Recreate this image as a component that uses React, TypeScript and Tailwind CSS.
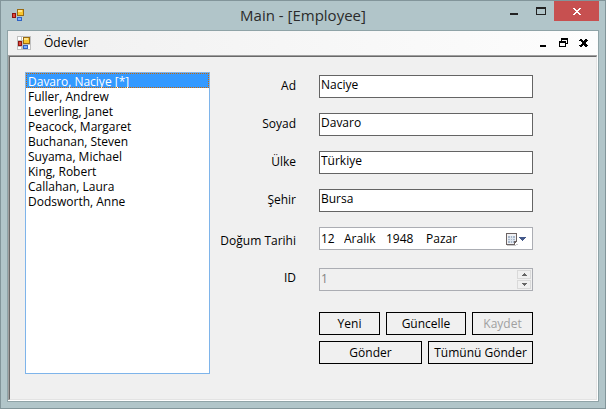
import { ReactNode } from "react";

const employees = [
  "Davaro, Naciye [*]",
  "Fuller, Andrew",
  "Leverling, Janet",
  "Peacock, Margaret",
  "Buchanan, Steven",
  "Suyama, Michael",
  "King, Robert",
  "Callahan, Laura",
  "Dodsworth, Anne",
];

const textFields = [
  { id: "ad", label: "Ad", value: "Naciye" },
  { id: "soyad", label: "Soyad", value: "Davaro" },
  { id: "ulke", label: "Ülke", value: "Türkiye" },
  { id: "sehir", label: "Şehir", value: "Bursa" },
];

function FormGlyph({ framed = false }: { framed?: boolean }) {
  return (
    <svg width="14" height="14" viewBox="0 0 14 14" shapeRendering="crispEdges" aria-hidden="true">
      {framed && (
        <>
          <path d="M0 0h14v14H0z" fill="#c0c0c0" />
          <path d="M1 1h3v3H1zM1 11h3v2H1zM5 1h1v3H5zM11 9h2v4h-2z" fill="#fff" />
        </>
      )}
      <path d="M1 5h4v5H1z" fill="#8e1410" />
      <path d="M2 6h2v3H2z" fill="#e0483a" />
      <path d="M6 1h7v7H6z" fill="#9a6a10" />
      <path d="M7 2h5v5H7z" fill="#f7c52e" />
      <path d="M7 2h4v2H7z" fill="#ffe48a" />
      <path d="M6 9h5v4H6z" fill="#2f62c4" />
      <path d="M7 10h3v2H7z" fill="#7fb0fa" />
    </svg>
  );
}

function Field({ id, label, labelClass = "pb-0.5", children }: { id: string; label: string; labelClass?: string; children: ReactNode }) {
  return (
    <div className="flex h-[23px] items-center gap-[23px]">
      <label htmlFor={id} className={`w-[86px] shrink-0 text-right whitespace-nowrap ${labelClass}`}>
        {label}
      </label>
      {children}
    </div>
  );
}

function CommandButton({ className, disabled, children }: { className: string; disabled?: boolean; children: ReactNode }) {
  return (
    <button
      type="button"
      disabled={disabled}
      className={`h-[23px] border border-black pt-px leading-5 whitespace-nowrap disabled:text-[#a0a0a0] ${className}`}
    >
      {children}
    </button>
  );
}

export default function App() {
  return (
    <div className="flex h-screen flex-col border border-[#82959a] bg-[#b1c5c9] px-1.5 pb-1.5 font-['Open_Sans','Noto_Sans',sans-serif] text-[12px] text-black">
      <header className="flex h-[29px] shrink-0 items-start">
        <div className="flex w-[97px] pt-[7px] pl-1">
          <FormGlyph />
        </div>
        <h1 className="flex-1 pt-1 text-center text-[15px] leading-5 text-[#2b2b2b]">Main - [Employee]</h1>
        <div className="flex">
          <button type="button" aria-label="Simge durumuna küçült" className="h-5 w-[26px]">
            <svg width="26" height="20" shapeRendering="crispEdges"><path d="M8 12h8v2H8z" fill="#222" /></svg>
          </button>
          <button type="button" aria-label="Ekranı kapla" className="h-5 w-[26px]">
            <svg width="26" height="20" shapeRendering="crispEdges"><path d="M8 6h10v8H8zm1 2v5h8V8z" fill="#222" fillRule="evenodd" /></svg>
          </button>
          <button type="button" aria-label="Kapat" className="h-5 w-[45px] bg-[#c75050]">
            <svg width="45" height="20" shapeRendering="crispEdges">
              <path d="M19 7h2v1h1v1h2V8h1V7h2v1h-1v1h-1v1h-1v1h1v1h1v1h1v1h-2v-1h-1v-1h-2v1h-1v1h-2v-1h1v-1h1v-1h1v-1h-1V9h-1V8h-1z" fill="#fff" />
            </svg>
          </button>
        </div>
      </header>

      <div className="flex min-h-0 flex-1 flex-col border border-[#8fa3a7] bg-white">
        <nav className="flex h-6 shrink-0 items-center bg-linear-to-r from-[#f0f0f0] to-[#fdfdfd] pr-[5px] pl-[9px]">
          <FormGlyph framed />
          <button type="button" className="ml-[13px] leading-6">Ödevler</button>
          <div className="ml-auto flex">
            <button type="button" aria-label="Küçült" className="size-5">
              <svg width="20" height="20" shapeRendering="crispEdges"><path d="M7 12h6v2H7z" /></svg>
            </button>
            <button type="button" aria-label="Önceki boyut" className="size-5">
              <svg width="20" height="20" shapeRendering="crispEdges">
                <path d="M8 5h7v6h-2v3H6V8h2zm1 2v1h4v2h1V7zM7 10v3h5v-3z" fillRule="evenodd" />
              </svg>
            </button>
            <button type="button" aria-label="Kapat" className="size-5">
              <svg width="20" height="20" shapeRendering="crispEdges">
                <path d="M7 6h2v1h1v1h1V7h1V6h2v1h1v1h-1v1h-1v2h1v1h1v1h-1v1h-2v-1h-1v-1h-1v1H9v1H7v-1H6v-1h2v-1h1V9H8V8H6V7h1z" />
              </svg>
            </button>
          </div>
        </nav>

        <div className="mr-px mb-px flex min-h-0 flex-1 border-t border-l border-[#a0a0a0]">
          <main className="flex min-w-0 flex-1 border border-t-[#696969] border-r-[#e3e3e3] border-b-[#e3e3e3] border-l-[#696969] bg-[#f0f0f0] pt-[15px] pr-[63px] pb-[25px] pl-[15px]">
            <select
              size={9}
              aria-label="Çalışanlar"
              defaultValue={employees[0]}
              className="w-[185px] shrink-0 overflow-hidden rounded-none border border-[#7eb4ea] bg-white p-0 outline-none"
            >
              {employees.map((name) => (
                <option
                  key={name}
                  className="h-[15px] min-h-0 px-0.5 py-0 -outline-offset-1 outline-[#cc6600] text-black checked:bg-[#3399ff] checked:bg-linear-to-r checked:from-[#3399ff] checked:to-[#3399ff] checked:text-white checked:outline-1 checked:outline-dotted"
                >
                  {name}
                </option>
              ))}
            </select>

            <form className="min-w-0 flex-1 pt-[3px]">
              <div className="flex flex-col gap-[15px]">
                {textFields.map((f) => (
                  <Field key={f.id} id={f.id} label={f.label}>
                    <input
                      id={f.id}
                      defaultValue={f.value}
                      className="h-[23px] min-w-0 flex-1 border border-[#646464] bg-white px-px pb-1 outline-none"
                    />
                  </Field>
                ))}
                <Field id="gun" label="Doğum Tarihi" labelClass="pt-1">
                  <div className="flex h-[23px] min-w-0 flex-1 items-center border border-[#abadb3] bg-white pr-1 pl-px">
                    <input id="gun" defaultValue="12" className="w-[23px] outline-none" />
                    <input aria-label="Ay" defaultValue="Aralık" className="w-[42px] outline-none" />
                    <input aria-label="Yıl" defaultValue="1948" className="w-10 outline-none" />
                    <span>Pazar</span>
                    <button type="button" aria-label="Takvimi aç" className="ml-auto">
                      <svg width="23" height="14" viewBox="0 0 23 14" shapeRendering="crispEdges" aria-hidden="true">
                        <path d="M2 13h9v-1h2v1h-2v1H2z" fill="#c9c9c9" />
                        <path d="M1 1h11v9h-1v1h-1v2H1z" fill="#6b6262" />
                        <path d="M2 2h9v7H9v3H2z" fill="#f0f1f4" />
                        <path d="M3 4h7v5H9v2H3z" fill="#a9b8cb" />
                        <path d="M3 6h7v1H3zM3 8h7v1H3zM5 4h1v7H5zM7 4h1v7H7z" fill="#dde5ee" />
                        <path d="M14 5h7v1h-1v1h-1v1h-1v1h-1V8h-1V7h-1V6h-1z" fill="#44598a" />
                      </svg>
                    </button>
                  </div>
                </Field>
              </div>
              <div className="mt-[18px]">
                <Field id="kimlik" label="ID" labelClass="pb-1">
                  <div className="flex h-[23px] min-w-0 flex-1 items-center border border-[#abadb3] pr-px pl-px">
                    <input
                      id="kimlik"
                      type="number"
                      disabled
                      defaultValue={1}
                      className="min-w-0 flex-1 appearance-none bg-transparent pb-0.5 text-[#838383] [-moz-appearance:textfield] [&::-webkit-inner-spin-button]:appearance-none"
                    />
                    <div className="flex flex-col gap-px">
                      <button type="button" disabled aria-label="Artır" className="grid h-[9px] w-3.5 place-items-center border border-[#d9d9d9]">
                        <svg width="5" height="3" shapeRendering="crispEdges"><path d="M2 0h1v1h1v1h1v1H0V2h1V1h1z" fill="#666" /></svg>
                      </button>
                      <button type="button" disabled aria-label="Azalt" className="grid h-[9px] w-3.5 place-items-center border border-[#d9d9d9]">
                        <svg width="5" height="3" shapeRendering="crispEdges"><path d="M0 0h5v1H4v1H3v1H2V2H1V1H0z" fill="#666" /></svg>
                      </button>
                    </div>
                  </div>
                </Field>
              </div>
              <div className="mt-[21px] ml-[109px] flex flex-col gap-1.5">
                <div className="flex gap-1.5">
                  <CommandButton className="w-[61px]">Yeni</CommandButton>
                  <CommandButton className="flex-1">Güncelle</CommandButton>
                  <CommandButton className="w-[61px]" disabled>Kaydet</CommandButton>
                </div>
                <div className="flex gap-1.5">
                  <CommandButton className="flex-1">Gönder</CommandButton>
                  <CommandButton className="w-[105px]">Tümünü Gönder</CommandButton>
                </div>
              </div>
            </form>
          </main>
        </div>
      </div>
    </div>
  );
}
